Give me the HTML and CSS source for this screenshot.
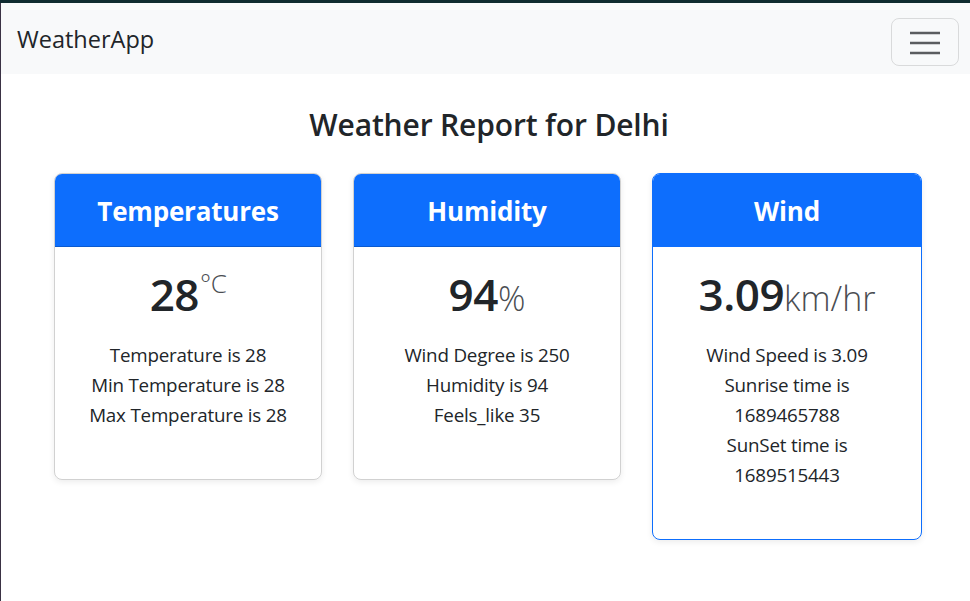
FILE: index.html
```html
<!DOCTYPE html>
<html lang="en">
<head>
<meta charset="utf-8">
<title>WeatherApp</title>
<link rel="stylesheet" href="styles.css">
</head>
<body>
<div class="window">
  <nav class="navbar">
    <span class="brand">WeatherApp</span>
    <button class="toggler" aria-label="Toggle navigation">
      <svg width="30" height="24" viewBox="0 0 30 24"><path d="M0 4h30M0 14h30M0 24h30" stroke="#5a5c5f" stroke-width="2.5" fill="none" transform="translate(0,-1)"/></svg>
    </button>
  </nav>
  <main class="content">
    <h2 class="title">Weather Report for Delhi</h2>
    <div class="cards">
      <div class="card">
        <div class="card-header">Temperatures</div>
        <div class="card-body">
          <div class="value">28<sup class="unit-sup">°C</sup></div>
          <p class="details">Temperature is 28<br>Min Temperature is 28<br>Max Temperature is 28</p>
        </div>
      </div>
      <div class="card">
        <div class="card-header">Humidity</div>
        <div class="card-body">
          <div class="value">94<span class="unit">%</span></div>
          <p class="details">Wind Degree is 250<br>Humidity is 94<br>Feels_like 35</p>
        </div>
      </div>
      <div class="card card-primary">
        <div class="card-header">Wind</div>
        <div class="card-body">
          <div class="value">3.09<span class="unit">km/hr</span></div>
          <p class="details">Wind Speed is 3.09<br>Sunrise time is<br>1689465788<br>SunSet time is<br>1689515443</p>
        </div>
      </div>
    </div>
  </main>
</div>
</body>
</html>
```

FILE: styles.css
```css
* { box-sizing: border-box; }
html, body { margin: 0; height: 100%; }
body {
  background: #3a3244;
  border-top: 3px solid #0f2b30;
  padding-left: 1px;
  font-family: "Open Sans", "Noto Sans", sans-serif;
  color: #212529;
  overflow: hidden;
}
.window {
  background: #fff;
  height: 100%;
}
.navbar {
  background: #f8f9fa;
  height: 71px;
  display: flex;
  align-items: center;
  justify-content: space-between;
  padding: 0 11px 0 16px;
}
.brand {
  font-size: 23.5px;
  color: #212529;
}
.toggler {
  width: 68px;
  height: 48px;
  margin-top: 6px;
  border: 1px solid rgba(0,0,0,.12);
  border-radius: 8px;
  background: transparent;
  display: flex;
  align-items: center;
  justify-content: center;
  padding: 0;
}
.toggler svg { display: block; overflow: visible; }
.content {
  padding: 0 46px 0 53px;
}
.title {
  margin: 31px 0 0;
  height: 68px;
  text-align: center;
  font-size: 30px;
  font-weight: 600;
  line-height: 40px;
  letter-spacing: -0.15px;
}
.cards {
  display: flex;
  gap: 31px;
  align-items: flex-start;
}
.card {
  flex: 0 0 268px;
  border: 1px solid rgba(0,0,0,.18);
  border-radius: 8px;
  overflow: hidden;
  box-shadow: 0 2px 6px rgba(0,0,0,.08);
}
.card-primary { border-color: #0d6efd; flex-basis: 270px; }
.card-header {
  background: #0d6efd;
  color: #fff;
  height: 74px;
  padding-top: 3px;
  display: flex;
  align-items: center;
  justify-content: center;
  font-size: 26px;
  font-weight: 700;
  letter-spacing: -0.2px;
  border-bottom: 1px solid rgba(0,0,0,.18);
  margin: -1px -1px 0;
}
.card-primary .card-header { border-bottom-color: #0d6efd; }
.card-body {
  padding: 20px 8px 49px;
  text-align: center;
}
.value {
  height: 54px;
  font-size: 44px;
  font-weight: 600;
  line-height: 54px;
  letter-spacing: -0.5px;
}
.unit-sup {
  font-size: 26px;
  font-weight: 300;
  color: #4a4d52;
  vertical-align: top;
  line-height: 1;
  position: relative;
  top: 3px;
  margin-left: 1px;
}
.unit {
  font-size: 34px;
  font-weight: 300;
  color: #4a4d52;
  letter-spacing: 0;
  line-height: 1;
}
.details {
  margin: 19px 0 0;
  font-size: 18.8px;
  line-height: 30px;
  letter-spacing: -0.2px;
}
```
